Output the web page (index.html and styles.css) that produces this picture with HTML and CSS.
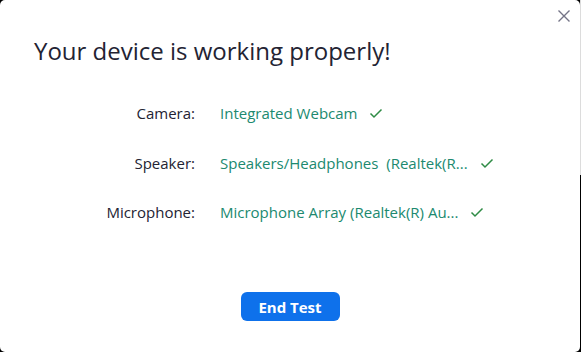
FILE: index.html
```html
<!DOCTYPE html>
<html>
<head>
<meta charset="utf-8">
<link rel="stylesheet" href="styles.css">
</head>
<body>
<div class="dialog">
  <button class="close" aria-label="Close">
    <svg width="14" height="14" viewBox="0 0 14 14"><path d="M1.5 1.5 L12.5 12.5 M12.5 1.5 L1.5 12.5" stroke="#747487" stroke-width="1.4" fill="none"/></svg>
  </button>
  <h1 class="title">Your device is working properly!</h1>
  <div class="devices">
    <div class="label">Camera:</div>
    <div class="value">Integrated Webcam<svg class="check" width="14" height="12" viewBox="0 0 14 12"><path d="M1.5 6.5 L5 10 L12.5 2.5" stroke="#2e8b45" stroke-width="1.5" fill="none"/></svg></div>
    <div class="label">Speaker:</div>
    <div class="value">Speakers/Headphones&nbsp; (Realtek(R...<svg class="check" width="14" height="12" viewBox="0 0 14 12"><path d="M1.5 6.5 L5 10 L12.5 2.5" stroke="#2e8b45" stroke-width="1.5" fill="none"/></svg></div>
    <div class="label">Microphone:</div>
    <div class="value">Microphone Array (Realtek(R) Au...<svg class="check" width="14" height="12" viewBox="0 0 14 12"><path d="M1.5 6.5 L5 10 L12.5 2.5" stroke="#2e8b45" stroke-width="1.5" fill="none"/></svg></div>
  </div>
  <div class="actions">
    <button class="end-test">End Test</button>
  </div>
</div>
</body>
</html>
```
FILE: styles.css
```css
html, body {
  margin: 0;
  padding: 0;
}
body {
  width: 581px;
  height: 352px;
  background: linear-gradient(#dcdcdc, #dcdcdc) right top / 1px 175px no-repeat, #000;
  font-family: "Open Sans", "Noto Sans", sans-serif;
  overflow: hidden;
}
.dialog {
  position: relative;
  width: 580px;
  height: 352px;
  background: #fff;
  border-radius: 5px;
  display: flex;
  flex-direction: column;
  box-sizing: border-box;
}
.close {
  position: absolute;
  top: 9px;
  right: 9px;
  width: 14px;
  height: 14px;
  padding: 0;
  border: 0;
  background: none;
  display: flex;
}
.title {
  margin: 35px 0 0 34px;
  font-size: 24px;
  font-weight: 400;
  line-height: 32px;
  color: #232333;
}
.devices {
  margin-top: 36px;
  display: grid;
  grid-template-columns: 195px auto;
  column-gap: 25px;
  grid-auto-rows: 49.5px;
  font-size: 15px;
  line-height: 20px;
}
.label {
  text-align: right;
  color: #232333;
}
.value {
  color: #20896f;
  display: flex;
  align-items: center;
  height: 20px;
}
.check {
  margin-left: 12px;
}
.actions {
  margin-top: auto;
  margin-bottom: 31px;
  display: flex;
  justify-content: center;
}
.end-test {
  width: 99px;
  height: 29px;
  border: 0;
  border-radius: 6px;
  background: #0e71eb;
  color: #fff;
  font-family: "Open Sans", "Noto Sans", sans-serif;
  font-weight: 700;
  font-size: 15px;
  padding: 0;
}
```
